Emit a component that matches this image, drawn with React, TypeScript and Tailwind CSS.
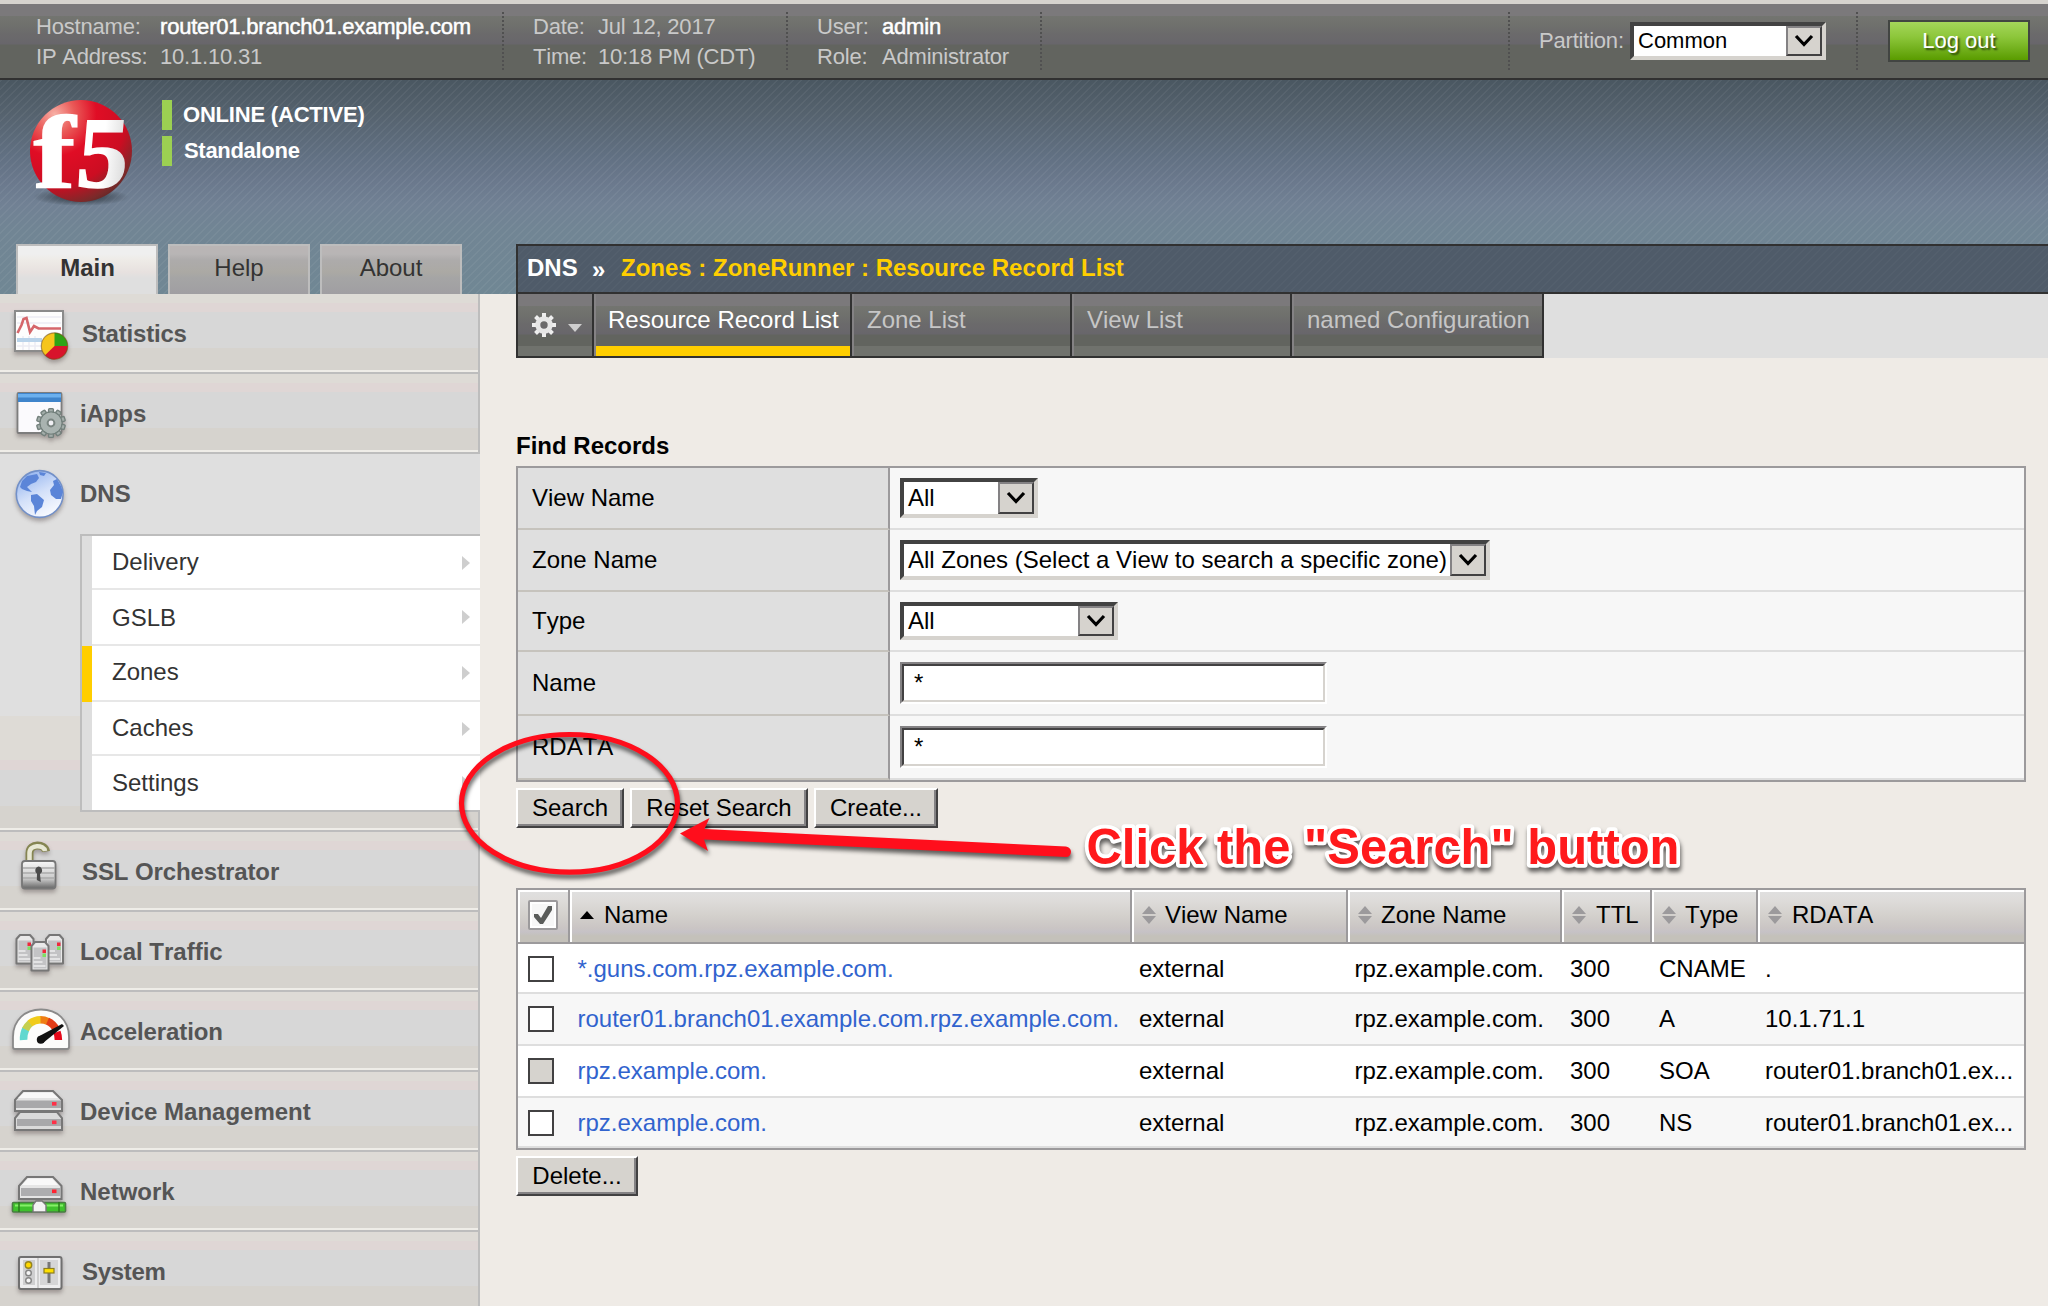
import React from "react";

const GEAR_TEETH = [0, 45, 90, 135, 180, 225, 270, 315];
const FINE_TEETH = [0, 36, 72, 108, 144, 180, 216, 252, 288, 324];

function IconFrame({ children }: { children: React.ReactNode }) {
  return (
    <svg viewBox="0 0 80 80" className="h-20 w-20 shrink-0 drop-shadow-[0_3px_2px_rgba(90,80,80,0.45)]">
      {children}
    </svg>
  );
}

function StatisticsIcon() {
  return (
    <IconFrame>
      <rect x="15" y="17" width="48" height="40" fill="#fdfdfd" stroke="#8b8b8b" strokeWidth="2" />
      <path d="M17 23H61M17 29H61M17 52H61M23 42V56M29 42V56M35 42V56" stroke="#ececf3" strokeWidth="1.5" />
      <path d="M17 46H42" stroke="#b9d3ea" strokeWidth="4" />
      <path d="M17.5 39L21.5 31L23.5 25L26.5 24L30 38L34 32L38.5 34.5H61" fill="none" stroke="#d5666b" strokeWidth="2.6" />
      <circle cx="54.5" cy="52" r="13.2" fill="#f6c51c" />
      <path d="M54.5 52V38.8A13.2 13.2 0 0 1 67.7 52Z" fill="#2fa316" />
      <path d="M54.5 52H67.7A13.2 13.2 0 0 1 45 61.2Z" fill="#d8142c" />
      <circle cx="54.5" cy="52" r="13.2" fill="none" stroke="#6b4a20" strokeOpacity="0.55" strokeWidth="1.2" />
    </IconFrame>
  );
}

function AppsIcon() {
  return (
    <IconFrame>
      <rect x="17.5" y="19" width="44" height="40" rx="1" fill="#fbfafd" stroke="#7d7d7d" strokeWidth="1.8" />
      <rect x="18" y="19" width="43" height="9" fill="#3f84cb" />
      <rect x="18" y="20" width="43" height="3.5" fill="#6cb0ee" />
      <g fill="#a3adaa" stroke="#73807c" strokeWidth="1.4">
        {FINE_TEETH.map((a) => (
          <rect key={a} x="48.6" y="34.6" width="4.8" height="6" rx="1" transform={`rotate(${a} 51 49)`} />
        ))}
        <circle cx="51" cy="49" r="11" />
      </g>
      <circle cx="51" cy="49" r="10.4" fill="#a9b3b0" />
      <circle cx="51" cy="49" r="3.4" fill="#f0f0f4" stroke="#7a8581" strokeWidth="2" />
    </IconFrame>
  );
}

function GlobeIcon() {
  return (
    <IconFrame>
      <defs>
        <linearGradient id="globe" x1="0.2" y1="0" x2="0.7" y2="1">
          <stop offset="0" stopColor="#8fb1ee" />
          <stop offset="0.5" stopColor="#d3e0f9" />
          <stop offset="1" stopColor="#fbfcff" />
        </linearGradient>
      </defs>
      <circle cx="39.7" cy="40" r="23.4" fill="url(#globe)" stroke="#7290c8" strokeWidth="1.6" />
      <g fill="#5b85d8">
        <path d="M20 33L22 27L27 22L37 20L39 24L36 28L31 30L27 33L32 38L27 37L22 35Z" />
        <path d="M31 41L37 40L44 46L42 53L37 57L35 61L34 52L31 47Z" />
        <path d="M39 18L46 19L44 22L40 21ZM50 36L54 31L53 27L57 25L61 32L63 38L61 45L56 45L51 41Z" />
      </g>
    </IconFrame>
  );
}

function LockIcon() {
  return (
    <IconFrame>
      <defs>
        <linearGradient id="lock" x1="0" x2="0" y1="0" y2="1">
          <stop offset="0" stopColor="#f7f7f7" />
          <stop offset="0.65" stopColor="#c9c9c9" />
          <stop offset="1" stopColor="#666" />
        </linearGradient>
      </defs>
      <path d="M29.500 30V21C29.500 11 45 11.500 46 19.500" fill="none" stroke="#858552" strokeWidth="8" />
      <path d="M29.500 30V21C29.500 12 44 12.500 45 19" fill="none" stroke="#e8e8d4" strokeWidth="4.500" />
      <rect x="22" y="29" width="33.500" height="27.500" rx="3" fill="url(#lock)" stroke="#777" strokeWidth="1.800" />
      <path d="M23 36H55M23 41H55M23 46H55" stroke="#aaa" strokeWidth="1.300" />
      <path d="M38.200 34.500a4 4 0 0 1 1.800 7.500l.8 8-4-2 .2-6.300a4 4 0 0 1 1.200-7.200Z" fill="#4b4b4b" />
    </IconFrame>
  );
}

function Tower({ x, y }: { x: number; y: number }) {
  return (
    <g transform={`translate(${x} ${y})`}>
      <path d="M1 5L4.500 1H14.500L18 5V29.500H1Z" fill="#e9e9e9" stroke="#777" strokeWidth="2" strokeLinejoin="round" />
      <rect x="3" y="6.500" width="13" height="21" fill="#c3c3c5" />
      <path d="M3 17H10M3 21H12M3 25H15" stroke="#eee" strokeWidth="1.500" />
      <rect x="12" y="8.500" width="3.500" height="3.500" fill="#f0283c" />
      <rect x="12" y="12.500" width="3.500" height="3.500" fill="#7fe063" />
    </g>
  );
}

function TrafficIcon() {
  return (
    <IconFrame>
      <Tower x={15.5} y={22} />
      <Tower x={45} y={22} />
      <Tower x={30.5} y={29} />
    </IconFrame>
  );
}

function GaugeIcon() {
  return (
    <IconFrame>
      <path d="M13 55V45C13 28 25 17.500 41 17.500S69 28 69 45V55Q69 57 67 57H15Q13 57 13 55Z" fill="#fcfcfb" stroke="#8a8a8a" strokeWidth="1.800" />
      <g fill="none" strokeWidth="7.500">
        <path d="M23.600 48A18 20 0 0 1 25.800 37" stroke="#62d8cf" />
        <path d="M25.500 37.500A18 20 0 0 1 30.500 31" stroke="#c5cf4f" />
        <path d="M30 31.400A18 20 0 0 1 41 27.700" stroke="#f0cb19" />
        <path d="M40.500 27.700A18 20 0 0 1 48 29.500" stroke="#ef7d13" />
        <path d="M47.500 29.200A18 20 0 0 1 56.500 38" stroke="#e23c17" />
        <path d="M57 40A18 20 0 0 1 58.400 48" stroke="#e5091a" />
      </g>
      <path d="M38.500 44.500L62 32L64 34L43 51Z" fill="#111" />
      <circle cx="40.800" cy="47.800" r="4" fill="#111" />
    </IconFrame>
  );
}

function DeviceIcon() {
  return (
    <IconFrame>
      <path d="M15 58V46L20 40H57L62 46V58Z" fill="#dadada" stroke="#777" strokeWidth="2" />
      <rect x="17" y="47" width="44" height="7" fill="#a8a8aa" />
      <path d="M15 39V28L23 19H53L62 28V39Z" fill="#e3e3e3" stroke="#777" strokeWidth="2" />
      <path d="M24 20.500H52L58 26H18Z" fill="#f8f8f8" />
      <rect x="16" y="28.500" width="45" height="7.500" fill="#a8a8aa" />
      <rect x="52" y="30" width="4.500" height="3.600" fill="#ff2f47" />
      <rect x="52" y="48.500" width="4.500" height="3.600" fill="#ff2f47" />
    </IconFrame>
  );
}

function NetworkIcon() {
  return (
    <IconFrame>
      <path d="M19 47V34L27 25H53L61.500 34V47Z" fill="#e5e5e5" stroke="#777" strokeWidth="2" />
      <path d="M28 26.500H52L58 33H22Z" fill="#f8f8f8" />
      <rect x="21" y="36" width="39" height="8" fill="#adadaf" />
      <rect x="52" y="37.500" width="4.500" height="3.600" fill="#ff2330" />
      <rect x="12.500" y="50.500" width="53" height="9.500" rx="1" fill="#3fc22d" stroke="#4a7d43" strokeWidth="1.600" />
      <path d="M15 53.500H63" stroke="#86ef69" strokeWidth="2" />
      <path d="M19 50V60M59 50V60" stroke="#2a7a1d" strokeWidth="1.500" />
      <path d="M33 60V53L36 49H42L46 53V60Z" fill="#f3f3f3" stroke="#777" strokeWidth="1.400" />
    </IconFrame>
  );
}

function SystemIcon() {
  return (
    <IconFrame>
      <rect x="19" y="25" width="42.500" height="32" rx="2" fill="#ededee" stroke="#707070" strokeWidth="2" />
      <rect x="23" y="28" width="12" height="25" fill="#cfcfd0" />
      <rect x="40" y="28" width="18" height="25" fill="#d5d5d6" />
      <path d="M38 26V56" stroke="#c4c4c4" strokeWidth="1.500" />
      <circle cx="28.500" cy="33" r="3.200" fill="#ffd800" stroke="#95841e" strokeWidth="1.400" />
      <circle cx="28.500" cy="41" r="2.800" fill="#f5f5f5" stroke="#858585" strokeWidth="1.400" />
      <circle cx="28.500" cy="48.500" r="2.800" fill="#f5f5f5" stroke="#858585" strokeWidth="1.400" />
      <path d="M49 30V51" stroke="#777" strokeWidth="3" />
      <rect x="44" y="36.500" width="10" height="4.500" fill="#ffe000" stroke="#8c7d1e" strokeWidth="1.200" />
    </IconFrame>
  );
}

function Logo() {
  return (
    <svg viewBox="0 0 110 116" className="h-[116px] w-[110px] overflow-visible">
      <defs>
        <radialGradient id="ball" cx="0.24" cy="0.14" r="0.98">
          <stop offset="0" stopColor="#f7b0a6" />
          <stop offset="0.2" stopColor="#ea5a58" />
          <stop offset="0.42" stopColor="#e00d25" />
          <stop offset="0.72" stopColor="#cc0d22" />
          <stop offset="0.92" stopColor="#7a2a2a" />
          <stop offset="1" stopColor="#5c2626" />
        </radialGradient>
        <linearGradient id="five" x1="0" y1="0" x2="1" y2="0">
          <stop offset="0.5" stopColor="#fff" />
          <stop offset="1" stopColor="#d8d8d8" />
        </linearGradient>
        <radialGradient id="ballShadow">
          <stop offset="0" stopColor="#1f262c" stopOpacity="0.9" />
          <stop offset="1" stopColor="#1f262c" stopOpacity="0" />
        </radialGradient>
      </defs>
      <ellipse cx="55" cy="101" rx="48" ry="9" fill="url(#ballShadow)" />
      <circle cx="55" cy="55" r="51" fill="url(#ball)" />
      <text transform="translate(7.500 91) scale(1.22 1)" fontSize="103" fontWeight="700" fontFamily="Liberation Serif, serif" fill="#fff" stroke="#fff" strokeWidth="1.500">f</text>
      <text transform="translate(48.500 91) skewX(-5) scale(1.02 1)" fontSize="101" fontWeight="700" fontFamily="Liberation Serif, serif" fill="url(#five)" stroke="url(#five)" strokeWidth="1.500">5</text>
    </svg>
  );
}

function DottedRule() {
  return (
    <div className="mt-2 h-[58px] w-0.5 shrink-0 bg-[repeating-linear-gradient(to_bottom,#505050_0_2px,transparent_2px_4px)]" />
  );
}

function InfoPair({ className, rows }: { className: string; rows: [string, string, boolean][] }) {
  return (
    <div className={`grid auto-rows-[30px] content-start pt-2 text-[22px] leading-[30px] tracking-[-0.2px] text-[#c9c9c9] ${className}`}>
      {rows.map(([label, value, strong]) => (
        <React.Fragment key={label}>
          <span>{label}</span>
          <span className={strong ? "text-white [-webkit-text-stroke:0.5px_white]" : ""}>{value}</span>
        </React.Fragment>
      ))}
    </div>
  );
}

function SelectBox({ value, className }: { value: string; className: string }) {
  return (
    <div className={`flex border-4 border-t-[#424242] border-l-[#424242] border-r-[#d6d3ce] border-b-[#d6d3ce] bg-white text-black ${className}`}>
      <span className="flex flex-1 items-center pl-1 whitespace-nowrap">{value}</span>
      <span className="flex w-9 items-center justify-center border-2 border-t-[#848284] border-l-[#848284] border-r-[#424142] border-b-[#424142] bg-[#d6d3ce]">
        <svg viewBox="0 0 20 14" className="h-3.5 w-5">
          <path d="M2 2L10 10.500L18 2" fill="none" stroke="#000" strokeWidth="3.200" />
        </svg>
      </span>
    </div>
  );
}

function TextBox() {
  return (
    <div className="h-[42px] w-[427px] border-2 border-t-[#848284] border-l-[#848284] border-r-white border-b-white">
      <div className="flex h-full items-center border-2 border-t-[#424142] border-l-[#424142] border-r-[#d6d3ce] border-b-[#d6d3ce] bg-white pl-2.5 leading-[34px]">
        *
      </div>
    </div>
  );
}

function PushButton({ label, className }: { label: string; className: string }) {
  return (
    <button className={`h-10 border-2 border-t-white border-l-white border-r-[#424142] border-b-[#424142] bg-[#d6d3ce] shadow-[inset_-2px_-2px_0_#848284] ${className}`}>
      {label}
    </button>
  );
}

const rowShade =
  "bg-[linear-gradient(to_bottom,#dedbd6_0_9px,#dfd6d5_9px_18px,#d7d7d7_18px_54px,#d6d3ce_54px_76px,#efede8_76px_78px,#bdbdbd_78px_80px)]";

function MenuItem({ icon, label, className = "pl-px" }: { icon: React.ReactNode; label: string; className?: string }) {
  return (
    <div className={`flex h-20 shrink-0 border-r-2 border-[#bdbdbd] ${rowShade}`}>
      {icon}
      <span className={`text-2xl leading-[79px] font-bold text-[#555] ${className}`}>{label}</span>
    </div>
  );
}

const subMenu: { label: string; size: string }[] = [
  { label: "Delivery", size: "h-[54px] leading-[51px]" },
  { label: "GSLB", size: "h-[56px] leading-[55px]" },
  { label: "Zones", size: "h-[56px] leading-[51px]" },
  { label: "Caches", size: "h-[54px] leading-[51px]" },
  { label: "Settings", size: "h-[54px] leading-[54px]" },
];

function Sidebar() {
  return (
    <nav className="flex flex-col">
      <MenuItem icon={<StatisticsIcon />} label="Statistics" className="pl-0.5 tracking-[-0.2px]" />
      <MenuItem icon={<AppsIcon />} label="iApps" className="tracking-[-0.1px]" />
      <div className="flex h-[378px] shrink-0 flex-col bg-[linear-gradient(to_bottom,#dfdfdf_0_262px,#dedbd6_262px_306px,#dfd6d5_306px_316px,#d7d7d7_316px_352px,#d6d3ce_352px_374px,#efede8_374px_376px,#bdbdbd_376px_378px)]">
        <div className="flex h-20">
          <GlobeIcon />
          <span className="text-2xl leading-[79px] font-bold text-[#555]">DNS</span>
        </div>
        <div className="ml-20 border-y-2 border-l-2 border-[#bdbdbd] bg-white">
          {subMenu.map((m, i) => (
            <div key={m.label} className={`flex text-2xl text-[#333] ${m.size}`}>
              <span className={`w-2.5 ${m.label === "Zones" ? "bg-[#ffce00]" : "bg-[#dedede]"}`} />
              <span className={`flex flex-1 justify-between pr-2.5 pl-5 ${i < 4 ? "border-b-2 border-[#e7e7e7]" : ""}`}>
                {m.label}
                <svg viewBox="0 0 8 14" className="mt-5 h-3.5 w-2">
                  <path d="M0 0L8 7L0 14Z" fill="#cecece" />
                </svg>
              </span>
            </div>
          ))}
        </div>
        <div className="flex-1 border-r-2 border-[#bdbdbd]" />
      </div>
      <MenuItem icon={<LockIcon />} label="SSL Orchestrator" className="pl-0.5 tracking-[-0.1px]" />
      <MenuItem icon={<TrafficIcon />} label="Local Traffic" className="" />
      <MenuItem icon={<GaugeIcon />} label="Acceleration" className="tracking-[-0.1px]" />
      <MenuItem icon={<DeviceIcon />} label="Device Management" className="" />
      <MenuItem icon={<NetworkIcon />} label="Network" className="" />
      <MenuItem icon={<SystemIcon />} label="System" className="pl-0.5 tracking-[-0.3px]" />
    </nav>
  );
}

function SideTab({ label, active }: { label: string; active?: boolean }) {
  return (
    <div
      className={`h-[50px] w-[142px] border-2 border-b-0 border-[#bdbdbd] text-center text-2xl leading-[43px] text-[#333] ${
        active
          ? "bg-[linear-gradient(to_bottom,#efefef_0,#efefef_8px,#eeebe7_14px,#e7e1df_26px,#dfdfdf_32px)] pl-px font-bold"
          : "bg-[linear-gradient(to_bottom,#bab5b5_0,#b8b5b5_8px,#adabab_14px,#aba9a4_26px,#a5a5a5_32px,#a09ea2_48px)]"
      }`}
    >
      {label}
    </div>
  );
}

const barShade =
  "bg-[linear-gradient(to_bottom,#7b797b_0_12px,#737570_12px,#70716d_20px,#6b6a6b_30px,#68666b_40px,#62645f_41px)]";

function NavTab({ label, className }: { label: string; className: string }) {
  return (
    <div className={`h-full border-r-2 border-l-2 border-r-[#313131] border-l-[#848284] leading-[51px] whitespace-nowrap ${className}`}>{label}</div>
  );
}

function Field({ label, height, children }: { label: string; height: string; children: React.ReactNode }) {
  return (
    <div className={`flex ${height}`}>
      <div className="flex w-[372px] items-center border-r-2 border-b-2 border-r-[#9c9a9c] border-b-[#c6c3bd] bg-[#dfdfdf] pl-3.5">
        {label}
      </div>
      <div className="flex flex-1 items-center border-b-2 border-[#dedede] bg-[#f7f7f7] pl-2.5">{children}</div>
    </div>
  );
}

function SortIcon() {
  return (
    <svg viewBox="0 0 14 18" className="h-[18px] w-3.5 shrink-0">
      <path d="M7 0L14 8H0ZM0 10H14L7 18Z" fill="#9c9a9c" />
    </svg>
  );
}

function HeadCell({ label, gap }: { label: string; gap: string }) {
  return (
    <div className={`flex items-center border-l-2 border-[#9c9a9c] pb-0.5 pl-2.5 shadow-[inset_2px_2px_0_#fff] ${gap}`}>
      <SortIcon />
      <span className="whitespace-nowrap">{label}</span>
    </div>
  );
}

const cols = "grid grid-cols-[50px_562px_216px_214px_90px_106px_268px]";

const records = [
  { name: "*.guns.com.rpz.example.com.", type: "CNAME", rdata: ".", box: "bg-white", row: "h-[50px] bg-white pt-0.5" },
  { name: "router01.branch01.example.com.rpz.example.com.", type: "A", rdata: "10.1.71.1", box: "bg-white", row: "h-[52px] bg-[#f7f7f7]" },
  { name: "rpz.example.com.", type: "SOA", rdata: "router01.branch01.ex...", box: "bg-[#d6d3ce]", row: "h-[52px] bg-white" },
  { name: "rpz.example.com.", type: "NS", rdata: "router01.branch01.ex...", box: "bg-white", row: "h-[50px] bg-[#f7f7f7] pt-0.5" },
];

function RecordTable() {
  return (
    <div className="mt-[60px] w-[1510px] border-2 border-[#9c9a9c]">
      <div className={`h-[54px] border-b-2 border-[#9c9a9c] bg-[linear-gradient(to_bottom,#e0e0e0_0,#dedcda_10px,#d3d0cc_26px,#cac5c4_38px,#c6c2c6_42px,#c4c1ba_46px)] ${cols}`}>
        <div className="flex items-center pb-0.5 pl-2.5 shadow-[inset_2px_2px_0_#fff]">
          <svg viewBox="0 0 30 30" className="h-[30px] w-[30px]">
            <rect x="1" y="1" width="28" height="28" rx="1" fill="#f7f7f7" stroke="#9c9a9c" strokeWidth="2" />
            <rect x="3" y="3" width="24" height="24" fill="none" stroke="#fff" strokeWidth="2" />
            <path d="M6 14H10L13 18L20 6H24V10L15 24H12L6 17Z" fill="#5a5c5a" />
          </svg>
        </div>
        <div className="flex items-center gap-2.5 border-l-2 border-[#9c9a9c] pb-0.5 pl-2.5 shadow-[inset_2px_2px_0_#fff]">
          <svg viewBox="0 0 14 8" className="h-2 w-3.5">
            <path d="M7 0L14 8H0Z" />
          </svg>
          <span>Name</span>
        </div>
        <HeadCell label="View Name" gap="gap-[9px]" />
        <HeadCell label="Zone Name" gap="gap-[9px]" />
        <HeadCell label="TTL" gap="gap-2.5" />
        <HeadCell label="Type" gap="gap-[9px]" />
        <HeadCell label="RDATA" gap="gap-2.5" />
      </div>
      {records.map((r, i) => (
        <div key={i} className={`items-center border-b-2 border-[#dedede] ${cols} ${r.row}`}>
          <span className={`ml-2.5 h-[26px] w-[26px] border-2 border-[#424142] ${r.box}`} />
          <a className="pl-[9.5px] whitespace-nowrap text-[#3163ce]">{r.name}</a>
          <span className="pl-[9px]">external</span>
          <span className="pl-[8.500px]">rpz.example.com.</span>
          <span className="pl-2.5">300</span>
          <span className="pl-[9px]">{r.type}</span>
          <span className="pl-[9px]">{r.rdata}</span>
        </div>
      ))}
    </div>
  );
}

function Annotation() {
  return (
    <svg viewBox="0 0 1260 170" className="pointer-events-none absolute top-[720px] left-[450px] h-[170px] w-[1260px] drop-shadow-[1px_4px_2px_rgba(0,0,0,0.6)]">
      <ellipse cx="119.500" cy="83.300" rx="108" ry="68.800" fill="none" stroke="#ff0e1c" strokeWidth="5.200" />
      <path d="M230 113.500L259.500 98L254.500 109L616 126.500Q621 127.500 621 132Q620.500 137 616 137L254 119.500L258 131Z" fill="#ff0e1c" />
      <text
        x="636.500"
        y="144.300"
        textLength="593"
        lengthAdjust="spacingAndGlyphs"
        fontSize="50"
        fontWeight="700"
        fontFamily="Liberation Sans, sans-serif"
        fill="#ff1a1c"
        stroke="#fff"
        strokeWidth="7.500"
        strokeLinejoin="round"
        paintOrder="stroke"
      >
        Click the "Search" button
      </text>
    </svg>
  );
}

export default function App() {
  return (
    <div className="relative flex h-[1306px] w-[2048px] flex-col overflow-hidden bg-[#efebe6] font-['Liberation_Sans',Arial,sans-serif] text-black [font-kerning:none]">
      <div className="h-1 shrink-0 bg-[#d6d3ce]" />
      <header className={`flex h-[76px] shrink-0 border-b-2 border-[#313131] ${barShade}`}>
        <InfoPair
          className="w-[502px] grid-cols-[124px_1fr] pl-9"
          rows={[
            ["Hostname:", "router01.branch01.example.com", true],
            ["IP Address:", "10.1.10.31", false],
          ]}
        />
        <DottedRule />
        <InfoPair
          className="w-[282px] grid-cols-[65px_1fr] pl-[29px]"
          rows={[
            ["Date:", "Jul 12, 2017", false],
            ["Time:", "10:18 PM (CDT)", false],
          ]}
        />
        <DottedRule />
        <InfoPair
          className="w-[252px] grid-cols-[65px_1fr] pl-[29px]"
          rows={[
            ["User:", "admin", true],
            ["Role:", "Administrator", false],
          ]}
        />
        <DottedRule />
        <div className="flex-1" />
        <DottedRule />
        <div className="flex w-[346px] items-start pt-4 pl-[29px] text-[22px]">
          <span className="w-[91px] pt-[3px] leading-9 tracking-[-0.2px] text-[#c9c9c9]">Partition:</span>
          <SelectBox value="Common" className="mt-0.5 h-[38px] w-[196px] leading-[28px]" />
        </div>
        <DottedRule />
        <div className="w-[190px] pt-4 pl-[30px]">
          <button className="h-[42px] w-[142px] border-2 border-[#424542] bg-[linear-gradient(to_bottom,#a5d65a,#8cc63a_40%,#5a9c00)] text-[22px] leading-[38px] text-white [text-shadow:2px_2px_2px_rgba(0,0,0,0.6)]">
            Log out
          </button>
        </div>
      </header>

      <div className="flex flex-1 bg-[repeating-linear-gradient(135deg,rgba(255,255,255,0.05)_0_1.6px,transparent_1.6px_5.657px),linear-gradient(to_bottom,#4a5761_0,#56636f_36px,#617082_75px,#6a788c_100px,#718194_125px,#718594_150px,#708794_214px)] bg-[length:100%_214px] bg-no-repeat">
        <aside className="flex w-[480px] shrink-0 flex-col">
          <div className="flex h-[164px] shrink-0 pt-4 pl-[26px]">
            <Logo />
            <div className="flex flex-col gap-1.5 pt-1 pl-[26px] text-[22px] font-bold tracking-[-0.2px] text-white">
              <div className="flex h-[30px] gap-[11px] leading-[29px]">
                <span className="w-2.5 bg-[#9cd052]" />
                ONLINE (ACTIVE)
              </div>
              <div className="flex h-[30px] gap-3 leading-[29px] tracking-[-0.3px]">
                <span className="w-2.5 bg-[#9cd052]" />
                Standalone
              </div>
            </div>
          </div>
          <div className="flex shrink-0 gap-2.5 pl-4">
            <SideTab label="Main" active />
            <SideTab label="Help" />
            <SideTab label="About" />
          </div>
          <Sidebar />
        </aside>

        <main className="flex-1 pt-[164px] pl-9 text-2xl">
          <div className="flex h-[50px] border-2 border-r-0 border-[#313131] bg-[repeating-linear-gradient(135deg,rgba(255,255,255,0.025)_0_1.6px,transparent_1.6px_5.657px),linear-gradient(#4f5b69,#4f5b69)] pl-[9px] leading-[43px] font-bold">
            <span className="w-[65px] text-white">DNS</span>
            <span className="w-[29px] pt-0.5 text-white">»</span>
            <span className="whitespace-nowrap text-[#ffce00]">Zones : ZoneRunner : Resource Record List</span>
          </div>
          <div className="flex h-16 bg-[#dfdfdf]">
            <div className="flex h-full border-b-2 border-l-2 border-[#313131] bg-[linear-gradient(to_bottom,#7b797b_0_12px,#737570_12px,#70716d_20px,#6b6a6b_30px,#68666b_40px,#62645f_41px_52px,#70726d_52px)] text-[#c6c6c6]">
              <div className="flex w-[76px] border-r-2 border-[#313131] pt-[17px] pl-3">
                <svg viewBox="0 0 28 28" className="h-7 w-7">
                  <g fill="#eee">
                    {GEAR_TEETH.map((a) => (
                      <rect key={a} x="12" y="2" width="4" height="6" transform={`rotate(${a} 14 14)`} />
                    ))}
                  </g>
                  <circle cx="14" cy="14" r="6.200" fill="none" stroke="#e6e6e6" strokeWidth="5" />
                </svg>
                <svg viewBox="0 0 14 8" className="mt-[13px] ml-2.5 h-2 w-3.5">
                  <path d="M0 0H14L7 8Z" fill="#cecece" />
                </svg>
              </div>
              <NavTab label="Resource Record List" className="w-[258px] pl-3 text-white shadow-[inset_0_-10px_0_#ffce00]" />
              <NavTab label="Zone List" className="w-[220px] pl-[13px]" />
              <NavTab label="View List" className="w-[220px] pl-[13px]" />
              <NavTab label="named Configuration" className="w-[252px] pl-[13px]" />
            </div>
          </div>

          <h2 className="mt-[68px] h-10 leading-[39px] font-bold">Find Records</h2>
          <div className="w-[1510px] border-2 border-[#9c9a9c]">
            <Field label="View Name" height="h-[62px] leading-[32px]">
              <SelectBox value="All" className="h-10 w-[138px]" />
            </Field>
            <Field label="Zone Name" height="h-[62px] leading-[32px]">
              <SelectBox value="All Zones (Select a View to search a specific zone)" className="h-10 w-[590px]" />
            </Field>
            <Field label="Type" height="h-[60px]">
              <SelectBox value="All" className="h-[38px] w-[218px]" />
            </Field>
            <Field label="Name" height="h-[64px]">
              <TextBox />
            </Field>
            <Field label="RDATA" height="h-[64px]">
              <TextBox />
            </Field>
          </div>
          <div className="mt-1.5 flex gap-1.5">
            <PushButton label="Search" className="w-[108px]" />
            <PushButton label="Reset Search" className="w-[178px]" />
            <PushButton label="Create..." className="w-[124px]" />
          </div>

          <RecordTable />
          <div className="mt-1.5 flex">
            <PushButton label="Delete..." className="w-[122px]" />
          </div>
        </main>
      </div>

      <Annotation />
    </div>
  );
}
